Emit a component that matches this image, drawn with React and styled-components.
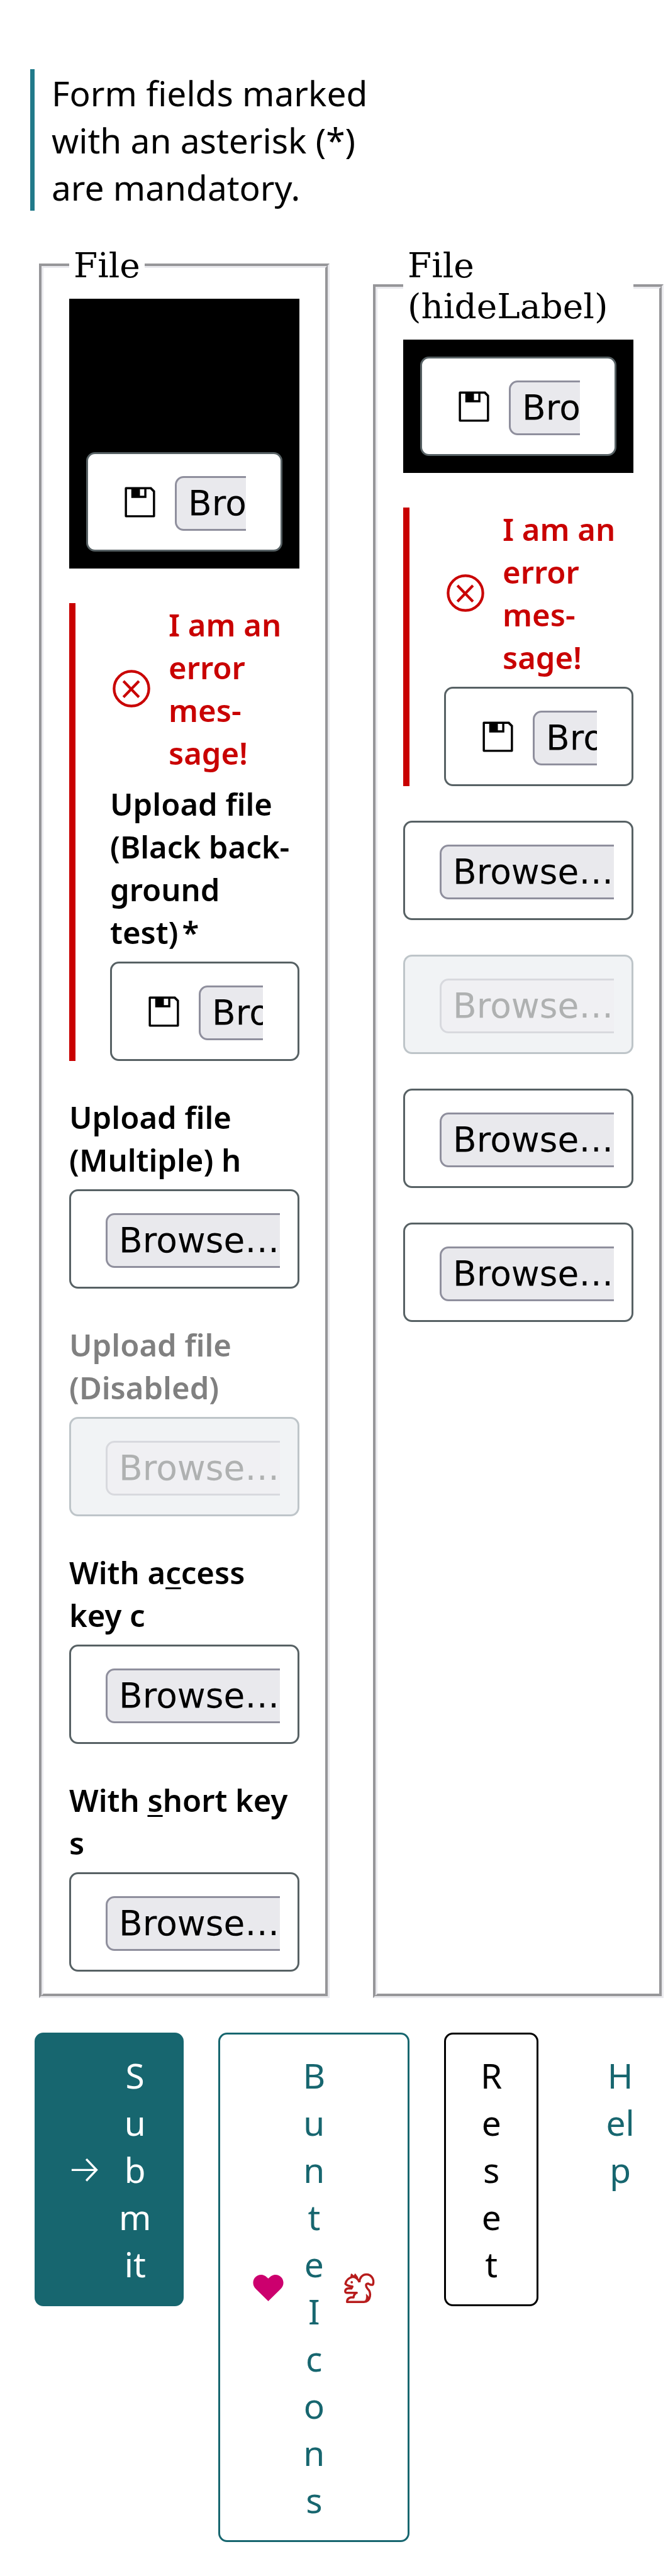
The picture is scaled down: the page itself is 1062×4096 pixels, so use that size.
import React, { useId } from "react";
import styled, { createGlobalStyle, css } from "styled-components";

const color = {
  primary: "#17666f",
  accent: "#217a8a",
  error: "#c90000",
  text: "#000",
  outline: "#576164",
  disabledText: "#808080",
};

const GlobalStyle = createGlobalStyle`
  *, *::before, *::after { box-sizing: border-box; }
  body {
    margin: 0;
    background: #fff;
    color: ${color.text};
    font-family: "Noto Sans", "Open Sans", sans-serif;
    font-size: 55px;
    line-height: 75px;
  }
`;

const Page = styled.form`
  padding: 110px 0 54px;
`;

const Notice = styled.p`
  margin: 0 0 55px 48px;
  max-width: 580px;
  padding-left: 27px;
  border-left: 7px solid ${color.accent};
`;

const Columns = styled.div`
  display: grid;
  grid-template-columns: repeat(2, minmax(0, 1fr));
  gap: 69px;
  padding: 0 7px 0 62px;
`;

const Group = styled.fieldset`
  min-width: 0;
  margin: 0;
  padding: 20px 41px 35px;
  border: 7px groove #e9e9ed;
`;

const Legend = styled.legend`
  padding: 0 7px;
  font-family: "DejaVu Serif", serif;
  line-height: 65px;
`;

const Fields = styled.div`
  display: flex;
  flex-direction: column;
  gap: 55px;
`;

const FieldBox = styled.div`
  display: flex;
  flex-direction: column;
  gap: 13px;
  ${(p) =>
    p.$dark &&
    css`
      padding: 27px;
      background: #000;
    `}
  ${(p) =>
    p.$invalid &&
    css`
      padding-left: 55px;
      border-left: 10px solid ${color.error};
    `}
`;

const Label = styled.label`
  color: ${(p) => (p.$disabled ? color.disabledText : color.text)};
  font-size: 49px;
  font-weight: 600;
  line-height: 68px;

  u {
    text-decoration-thickness: 3px;
    text-underline-offset: 5px;
  }
`;

const Required = styled.span`
  margin-left: 6px;
`;

const ErrorMessage = styled.div`
  display: flex;
  align-items: center;
  gap: 25px;
  color: ${color.error};
  font-size: 49px;
  font-weight: 600;
  line-height: 68px;

  svg {
    flex: none;
    width: 68px;
    height: 68px;
  }
`;

const FileBox = styled.div`
  position: relative;
  display: flex;
  align-items: center;
  gap: 28px;
  height: 158px;
  padding: 0 ${(p) => (p.$icon ? 55 : 28)}px 0 55px;
  border: 3px solid ${(p) => (p.$disabled ? "#bec5c9" : color.outline)};
  border-radius: 14px;
  background: ${(p) => (p.$disabled ? "#f1f3f5" : "#fff")};

  svg {
    flex: none;
    width: 55px;
    height: 55px;
  }
`;

const NativeFile = styled.input`
  position: absolute;
  inset: 0;
  width: 100%;
  height: 100%;
  margin: 0;
  opacity: 0;
  cursor: pointer;
`;

const Clip = styled.span`
  flex: 1;
  min-width: 0;
  padding-top: 4px;
  overflow: hidden;
`;

const Browse = styled.span`
  display: block;
  width: max-content;
  padding: 0 18px;
  border: 3px solid ${(p) => (p.$disabled ? "#d8d9de" : "#8f8f9d")};
  border-radius: 14px;
  background: ${(p) => (p.$disabled ? "#f0f0f3" : "#e9e9ed")};
  color: ${(p) => (p.$disabled ? "#afb1b1" : color.text)};
  font-family: "DejaVu Sans", sans-serif;
  line-height: 81px;
`;

const Actions = styled.div`
  display: flex;
  align-items: flex-start;
  gap: 55px;
  padding: 55px 0 0 55px;
`;

const variants = {
  primary: css`
    border-color: ${color.primary};
    background: ${color.primary};
    color: #fff;
  `,
  secondary: css`
    border-color: ${color.primary};
    color: ${color.primary};
  `,
  normal: css`
    border-color: #000;
    color: #000;
  `,
  ghost: css`
    color: ${color.primary};
  `,
};

const Button = styled.button`
  display: flex;
  flex: none;
  align-items: center;
  justify-content: center;
  gap: 27px;
  padding: 27px 49px;
  border: 3px solid transparent;
  border-radius: 14px;
  background: transparent;
  font: inherit;
  cursor: pointer;
  ${(p) => variants[p.$variant]}

  svg {
    flex: none;
    width: 55px;
    height: 55px;
  }
`;

const ButtonText = styled.span`
  width: ${(p) => (p.$plain ? "46px" : "min-content")};
  overflow-wrap: anywhere;
  text-align: center;
`;

const SaveIcon = () => (
  <svg viewBox="0 0 64 64" aria-hidden="true">
    <path
      fillRule="evenodd"
      d="M6 4H53L60 11V58Q60 60 58 60H6Q4 60 4 58V6Q4 4 6 4ZM8 8V56H56V13L51 8H44V24H16V8ZM32 8V20H40V8Z"
    />
  </svg>
);

const ErrorIcon = () => (
  <svg viewBox="0 0 80 80" fill="none" stroke="currentColor" strokeWidth="5" aria-hidden="true">
    <circle cx="40" cy="40" r="32.5" />
    <path d="M25 26L54 56M54 26L25 56" />
  </svg>
);

const ArrowIcon = () => (
  <svg viewBox="0 0 64 64" fill="none" stroke="currentColor" strokeWidth="4" aria-hidden="true">
    <path d="M8 33H54M35 13L54 33L35 53" />
  </svg>
);

const HeartIcon = () => (
  <svg viewBox="0 0 64 64" fill="#cc006e" aria-hidden="true">
    <path d="M32 15C28 11 24 8 18.7 8C10.5 8 4 14.5 4 23C4 28 6 31.5 9.5 34.8L32 57L54.5 34.8C58 31.5 60 28 60 23C60 14.5 53.5 8 45.3 8C40 8 36 11 32 15Z" />
  </svg>
);

const SquirrelIcon = () => (
  <svg
    viewBox="0 0 64 64"
    fill="none"
    stroke="#b71c1c"
    strokeWidth="4"
    strokeLinejoin="round"
    aria-hidden="true"
  >
    <path d="M32 22C29 15 24 12 19 12C12 14 7 19 6 25C9 28 14 29.500 19 30L17 33.500H11C5 34 4 41 8 41.500H27C23 43 21.500 46 21 50H16C11.500 51 9 54 9 58.500H40C54 58 54 40 47 34C43 29 43 25 48 24.500C51 26 54 28.500 57 26C60 17 54 7.500 45 7.500C37 7.500 32 14 32 22" />
    <path d="M16 13L17 7L22 11L24 7L29 14" fill="#b71c1c" strokeWidth="2" />
    <path d="M42 57C45 54 45 50 44.500 44C48 47 50 51 49 53Z" fill="#b71c1c" strokeWidth="1" />
    <circle cx="17.700" cy="22" r="2.200" fill="#b71c1c" stroke="none" />
  </svg>
);

function FileField({ label, children, icon, dark, error, required, disabled, multiple, accessKey }) {
  const id = useId();
  return (
    <FieldBox $dark={dark} $invalid={Boolean(error)}>
      {error && (
        <ErrorMessage id={`${id}-error`}>
          <ErrorIcon />
          <span>{error}</span>
        </ErrorMessage>
      )}
      {children && (
        <Label htmlFor={id} $disabled={disabled}>
          {children}
          {required && <Required>*</Required>}
        </Label>
      )}
      <FileBox $icon={icon} $disabled={disabled}>
        {icon && <SaveIcon />}
        <Clip aria-hidden="true">
          <Browse $disabled={disabled}>Browse…</Browse>
        </Clip>
        <NativeFile
          id={id}
          type="file"
          aria-label={label}
          aria-describedby={error ? `${id}-error` : undefined}
          disabled={disabled}
          multiple={multiple}
          required={required}
          accessKey={accessKey}
        />
      </FileBox>
    </FieldBox>
  );
}

const errorText = "I am an error mes\u00adsage!";

export default function App() {
  return (
    <>
      <GlobalStyle />
      <Page onSubmit={(e) => e.preventDefault()}>
        <Notice>Form fields marked with an asterisk (*) are mandatory.</Notice>
        <Columns>
          <Group>
            <Legend>File</Legend>
            <Fields>
              <FileField icon dark>{"Upload file (Black back\u00adground test)"}</FileField>
              <FileField icon required error={errorText}>
                {"Upload file (Black back\u00adground test)"}
              </FileField>
              <FileField multiple accessKey="h">Upload file (Multiple) h</FileField>
              <FileField disabled>Upload file (Disabled)</FileField>
              <FileField accessKey="c">
                With a<u>c</u>cess key c
              </FileField>
              <FileField>
                With <u>s</u>hort key s
              </FileField>
            </Fields>
          </Group>
          <Group>
            <Legend>File (hideLabel)</Legend>
            <Fields>
              <FileField icon dark label="Upload file (Black background test)" />
              <FileField icon required error={errorText} label="Upload file" />
              <FileField multiple label="Upload file (Multiple)" />
              <FileField disabled label="Upload file (Disabled)" />
              <FileField label="With access key" />
              <FileField label="With short key" />
            </Fields>
          </Group>
        </Columns>
        <Actions>
          <Button type="submit" $variant="primary">
            <ArrowIcon />
            <ButtonText>Submit</ButtonText>
          </Button>
          <Button type="button" $variant="secondary">
            <HeartIcon />
            <ButtonText>Bunte Icons</ButtonText>
            <SquirrelIcon />
          </Button>
          <Button type="reset" $variant="normal">
            <ButtonText $plain>Reset</ButtonText>
          </Button>
          <Button type="button" $variant="ghost">
            <ButtonText $plain>Help</ButtonText>
          </Button>
        </Actions>
      </Page>
    </>
  );
}
